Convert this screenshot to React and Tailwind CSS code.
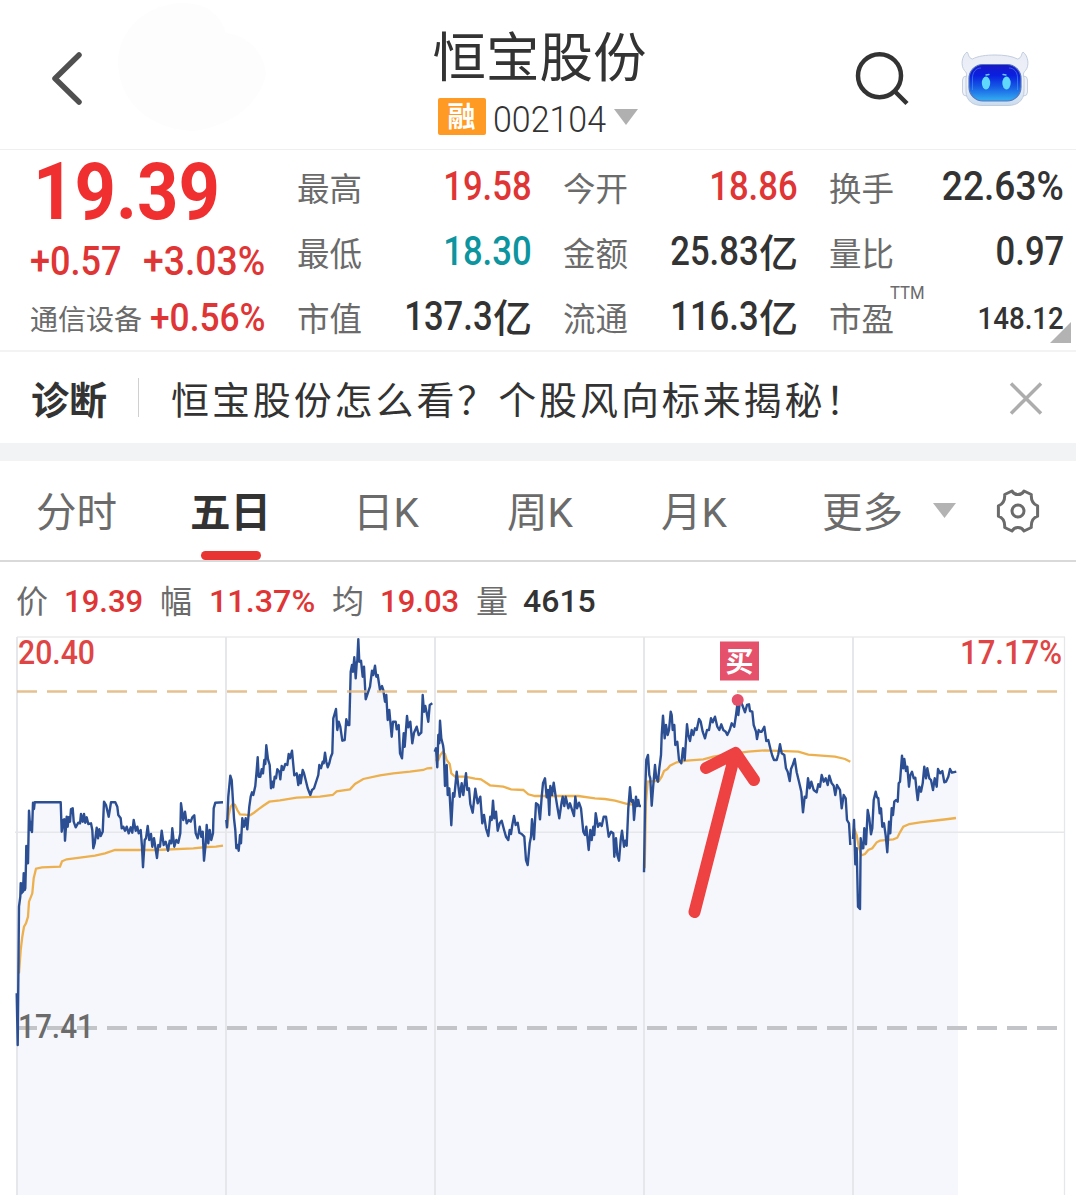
import React from 'react';

const COLORS = {
  price: '#2c4f94',
  average: '#edb04e',
  area: '#f5f7fc',
  grid: '#e6e7ea',
};

const QUOTES = [
  [
    { label: '最高', value: '19.58', tone: 'text-[#e03535]' },
    { label: '今开', value: '18.86', tone: 'text-[#e03535]' },
    { label: '换手', value: '22.63%', fit: 'scale-x-[.905] text-[41px]', tone: 'text-[#333]' },
  ],
  [
    { label: '最低', value: '18.30', tone: 'text-[#0c949f]' },
    { label: '金额', value: '25.83', unit: '亿', tone: 'text-[#333]' },
    { label: '量比', value: '0.97', tone: 'text-[#333]' },
  ],
  [
    { label: '市值', value: '137.3', unit: '亿', tone: 'text-[#333]' },
    { label: '流通', value: '116.3', unit: '亿', tone: 'text-[#333]' },
    { label: '市盈', value: '148.12', note: 'TTM', fit: 'scale-x-[.865] pt-[2px] text-[32px]', tone: 'text-[#333]' },
  ],
];

// Intraday samples, three units per pixel, relative to each day's origin
const DAYS = [
  {
    origin: [0, 630],
    price:
      '50,1090 53,1245 55,1060 57,830 61,800 62,760 65,790 67,760 69,785 71,730 74,780 76,775 78,700 79,648 84,700 87,542 91,600 92,575 96,606 99,518 102,537 104,517 182,517 185,605 190,570 193,568 195,632 200,560 203,590 206,562 210,575 213,537 218,535 221,575 227,592 235,578 240,580 243,552 248,575 252,552 256,578 260,562 265,582 273,580 277,600 280,655 284,640 290,593 294,625 298,598 302,618 308,605 312,515 318,525 326,560 333,517 346,517 352,530 355,555 362,565 365,595 370,590 375,602 380,590 386,610 392,592 397,608 401,570 407,602 412,590 416,610 422,600 426,650 429,712 434,630 438,625 443,588 448,630 453,612 457,650 462,625 466,650 471,684 475,645 480,650 485,602 491,645 497,635 504,662 509,632 514,640 517,595 523,650 529,630 535,638 541,610 543,520 550,570 555,545 560,580 566,570 572,575 577,562 583,556 587,610 593,625 599,590 604,620 608,605 612,692 617,640 620,585 625,640 629,600 634,630 639,610 641,535 646,518 669,517',
    average:
      '57,1030 62,960 67,920 72,890 78,880 84,860 87,815 97,790 101,745 108,716 126,712 180,710 186,694 200,688 240,683 285,677 315,670 345,660 470,660 580,655 620,651 648,650 669,647',
  },
  {
    origin: [220, 630],
    price:
      '19,570 21,592 25,500 31,437 35,450 38,500 42,565 46,600 49,655 53,645 56,662 60,615 63,640 67,565 72,590 77,565 82,598 88,530 92,500 96,487 100,495 106,468 110,420 113,382 116,440 121,440 125,418 129,430 133,390 136,402 139,346 144,388 149,405 153,475 157,455 160,472 164,440 168,445 172,418 178,425 181,448 185,408 190,420 196,402 202,405 206,372 210,385 216,362 219,395 223,436 230,430 235,465 239,435 242,460 248,420 252,430 257,450 263,475 271,495 276,480 282,475 290,450 295,435 298,405 303,415 308,395 311,400 315,368 319,395 323,412 328,400 332,382 337,370 340,265 343,255 348,237 352,300 356,275 361,290 367,332 374,330 379,268 384,285 388,285 392,125 396,105 399,125 403,82 407,145 410,100 412,92 415,28 418,95 423,92 428,140 432,110 437,208 443,190 450,170 456,122 460,135 465,107 469,140 473,135 480,180 486,168 490,180 495,215 499,195 503,270 508,240 515,320 519,275 527,275 530,298 536,285 540,370 546,385 551,310 554,350 561,258 565,292 571,275 577,340 582,308 590,290 596,315 604,308 608,195 612,245 616,228 620,248 625,275 629,225 637,220',
    average:
      '21,595 26,555 32,530 38,522 45,525 52,540 60,553 75,554 90,556 102,548 115,538 130,527 148,515 180,511 230,503 300,500 338,495 350,484 390,478 405,462 430,447 480,436 520,430 570,425 610,420 622,415 637,414',
  },
  {
    origin: [425, 680],
    price:
      '29,215 33,205 37,262 40,165 43,190 45,122 49,175 54,195 56,210 60,318 65,255 68,345 73,325 76,380 79,436 84,340 88,350 95,275 99,310 104,350 110,310 115,345 123,280 127,330 132,325 136,372 143,398 151,326 158,370 166,350 172,430 177,405 183,445 190,468 196,410 200,420 204,362 208,415 213,395 218,452 224,430 230,422 238,452 243,470 250,480 254,450 258,462 262,435 267,408 272,435 278,428 283,458 290,462 298,470 303,540 308,555 314,490 318,470 321,418 327,478 333,370 340,375 345,418 350,350 354,310 360,295 365,352 369,330 373,405 376,318 381,345 386,308 392,350 397,380 403,415 410,365 413,350 418,378 422,350 430,385 435,370 447,408 451,350 456,385 462,368 468,385 475,455 480,465 484,440 491,510 496,450 500,480 505,440 508,465 512,400 519,440 525,430 530,438 536,410 543,410 551,470 558,455 565,460 568,530 573,475 577,525 582,542 587,480 591,452 597,500 601,482 605,497 610,385 615,322 619,365 624,360 627,420 633,350 636,378 640,360 643,378 648,378',
    average:
      '31,240 40,240 46,225 53,216 60,222 65,240 74,252 79,280 90,290 120,290 150,296 168,298 195,316 235,320 258,328 295,330 310,343 330,348 460,348 510,355 540,357 570,362 608,372 645,375',
  },
  {
    origin: [635, 635],
    price:
      '27,712 31,460 34,375 39,360 43,420 46,430 50,512 55,450 60,390 64,430 69,440 73,400 78,360 80,300 84,242 89,310 93,270 98,300 102,285 107,230 110,240 113,285 118,270 121,330 127,320 132,375 139,385 144,340 149,375 156,268 160,300 165,318 170,285 175,300 180,280 185,285 192,252 197,260 203,290 210,310 216,285 222,285 228,250 233,262 240,245 247,275 253,285 259,268 265,285 272,290 277,300 284,285 290,265 298,275 303,240 307,210 310,240 315,195 322,210 330,232 336,210 342,208 345,228 352,230 356,270 363,290 366,312 371,285 376,290 380,290 388,275 394,318 400,315 407,345 412,362 417,375 425,375 430,358 435,328 440,355 448,360 453,400 458,410 464,438 468,402 473,390 479,372 485,412 492,440 499,470 504,532 509,485 514,488 519,430 524,460 529,440 536,465 545,472 550,448 555,455 560,420 566,440 572,430 578,450 583,422 590,445 596,452 601,480 606,450 615,465 620,520 626,480 632,490 636,555 642,565 646,630',
    average:
      '29,700 33,500 38,440 72,438 80,425 87,408 97,402 105,392 125,382 155,377 205,373 235,365 300,355 340,350 390,346 490,350 520,359 600,365 630,372 646,380',
  },
  {
    origin: [840, 635],
    price:
      '39,612 42,555 46,688 50,640 54,815 60,822 62,610 66,640 70,640 73,580 78,628 83,525 88,550 93,598 97,580 101,495 107,470 111,487 115,490 119,535 123,520 127,575 132,565 137,602 142,652 147,560 151,595 155,520 159,540 163,500 168,495 173,500 176,445 180,440 183,400 186,362 190,400 193,372 198,408 202,395 207,455 211,420 216,410 221,430 226,428 230,470 233,495 238,455 243,470 248,445 253,395 258,430 262,400 268,430 273,435 279,465 284,430 290,455 294,402 300,415 307,408 313,442 318,440 325,425 330,402 336,413 349,410',
    average:
      '42,580 50,600 56,635 64,661 75,657 85,645 97,640 110,622 120,617 160,613 172,608 180,592 190,575 208,567 240,562 300,555 325,552 348,549',
  },
];

const toPoints = (samples, [ox, oy]) =>
  samples
    .split(' ')
    .map((pair) => {
      const [x, y] = pair.split(',').map(Number);
      return `${(ox + x / 3).toFixed(1)},${(oy + y / 3).toFixed(1)}`;
    })
    .join(' ');

function RobotIcon() {
  return (
    <svg width="68" height="56" viewBox="961 51 68 56">
      <defs>
        <linearGradient id="shell" x1="0" y1="0" x2="0" y2="1">
          <stop offset="0" stopColor="#e9ecf5" />
          <stop offset="0.6" stopColor="#eff2f8" />
          <stop offset="1" stopColor="#c8dcee" />
        </linearGradient>
        <linearGradient id="visor" x1="0" y1="0" x2="0" y2="1">
          <stop offset="0" stopColor="#1a18c4" />
          <stop offset="0.3" stopColor="#0a1fe0" />
          <stop offset="0.6" stopColor="#1458e4" />
          <stop offset="1" stopColor="#35b0f2" />
        </linearGradient>
      </defs>
      <rect x="962.5" y="76" width="9" height="20" rx="4" fill="#eff2f8" stroke="#b9c5d8" strokeWidth="0.8" />
      <rect x="1018.5" y="76" width="9" height="20" rx="4" fill="#eff2f8" stroke="#b9c5d8" strokeWidth="0.8" />
      <path
        d="M967 52C961.500 56 960.500 66 964.500 70.500C967 73 967 75 966 78V91C966 101 973 105.500 982 105.500H1008C1017 105.500 1024 101 1024 91V78C1023 75 1023 73 1025.500 70.500C1029.500 66 1028.500 56 1023 52C1021 54 1022 58 1017.500 59C1012 56 1004 55 995 55C986 55 978 56 972.500 59C968 58 969 54 967 52Z"
        fill="url(#shell)"
        stroke="#bcc8da"
        strokeWidth="0.9"
      />
      <rect x="969" y="64.500" width="52" height="36.500" rx="14" fill="url(#visor)" stroke="#5676be" strokeWidth="1.200" />
      <path d="M972.500 90V78C972.500 72 976 68 981 68M1017.500 90V78C1017.500 72 1014 68 1009 68" fill="none" stroke="#5aa0f5" strokeOpacity="0.500" />
      <ellipse cx="986" cy="83" rx="4.200" ry="6.500" fill="#5fd8fb" />
      <ellipse cx="1006.500" cy="83" rx="4.200" ry="6.500" fill="#5fd8fb" />
      <path d="M986 75L989 74.500M1003 74.500L1006 75" stroke="#6ec8fb" strokeWidth="1.300" strokeLinecap="round" />
    </svg>
  );
}

function GearIcon() {
  return (
    <svg width="46" height="46" viewBox="-23 -23 46 46" fill="none" stroke="#6b6b6b" strokeWidth="3" strokeLinejoin="round">
      <path d="M-6-20C-3.500-15.200 3.500-15.200 6-20L13.300-16.500C13-11.500 14.500-7 19.600-5.200V5.200C14.500 7 13 11.500 13.300 16.500L6 20C3.500 15.200-3.500 15.200-6 20L-13.300 16.500C-13 11.500-14.500 7-19.600 5.200V-5.200C-14.500-7-13-11.500-13.300-16.500Z" />
      <circle r="6" />
    </svg>
  );
}

function Header() {
  return (
    <header className="flex h-[150px] items-start justify-between border-b border-[#efefef] pl-[50px] pr-[47px]">
      <div className="flex w-[383px]">
        <svg width="230" height="140" viewBox="50 0 230 140" fill="none">
          <path
            d="M182 3C210 3 222 18 226 33C250 36 264 54 266 74C260 106 226 128 192 131C150 128 120 104 118 64C118 28 146 5 182 3Z"
            fill="#fdfdfd"
          />
          <path d="M79 55L55 78.500L79 102" stroke="#505050" strokeWidth="5.500" strokeLinecap="round" strokeLinejoin="round" />
        </svg>
      </div>
      <div className="flex w-[214px] flex-col items-center">
        <h1 className="mt-[26px] whitespace-nowrap text-[53.500px] leading-[66px] text-[#333]">恒宝股份</h1>
        <div className="mt-[6px] flex h-[37px] w-[204px] items-center">
          <span className="flex h-[37px] w-[48px] shrink-0 items-center justify-center rounded-[2px] bg-[#ff9a24] pt-[3px] text-[28px] leading-none font-bold text-white">
            融
          </span>
          <span className="ml-[7px] w-[121px] shrink-0 origin-left scale-x-[.93] pt-[8px] text-[36.500px] leading-none font-light text-[#333]">002104</span>
          <svg className="shrink-0" width="24" height="16" viewBox="0 0 24 16">
            <path d="M0 0H24L12 16Z" fill="#b0b0b0" />
          </svg>
        </div>
      </div>
      <div className="flex w-[383px] justify-end gap-[51px] pt-[51px]">
        <svg width="56" height="56" viewBox="854 51 56 56" fill="none" stroke="#333" strokeWidth="4.500">
          <circle cx="879.500" cy="75.700" r="21.500" />
          <path d="M894.500 91L907 103.500" />
        </svg>
        <RobotIcon />
      </div>
    </header>
  );
}

function QuoteCell({ label, value, unit, note, fit = 'scale-x-[.845] text-[41px]', tone }) {
  return (
    <div className="flex w-[235px] items-center justify-between">
      <span className="relative pt-[7px] text-[32.500px] leading-none text-[#6b6b6b]">
        {label}
        {note && (
          <sup className="absolute top-[-14px] left-[61px] origin-left scale-x-[.88] text-[19px] leading-none font-normal">{note}</sup>
        )}
      </span>
      <span className={`flex items-center leading-none font-medium ${tone}`}>
        <span className={`origin-right ${fit}`}>{value}</span>
        {unit && <span className="pt-[5px] text-[39px]">{unit}</span>}
      </span>
    </div>
  );
}

function QuotePanel() {
  return (
    <section className="relative flex h-[202px] border-b-2 border-[#f3f3f3] pl-[30px]">
      <div className="w-[267px] text-[#e03535]">
        <div className="ml-[3px] w-[200px] origin-left scale-x-[.915] pt-[3px] text-[79px] leading-[78px] font-bold text-[#f03030]">19.39</div>
        <div className="flex h-[61px] items-center text-[41px] leading-none font-medium">
          <span className="w-[113px] origin-left scale-x-[.88]">+0.57</span>
          <span className="origin-left scale-x-[.91]">+3.03%</span>
        </div>
        <div className="flex h-[52px] items-center leading-none">
          <span className="w-[120px] shrink-0 pt-[5px] text-[28px] text-[#6b6b6b]">通信设备</span>
          <span className="origin-left scale-x-[.905] text-[39px] font-medium">+0.56%</span>
        </div>
      </div>
      <div className="flex flex-col pt-[4px]">
        {QUOTES.map((row, i) => (
          <div key={i} className="flex h-[65px] gap-[31px]">
            {row.map((cell) => (
              <QuoteCell key={cell.label} {...cell} />
            ))}
          </div>
        ))}
      </div>
      <svg className="absolute right-[5px] bottom-[7px]" width="21" height="21" viewBox="0 0 21 21">
        <path d="M21 0V21H0Z" fill="#b3b3b3" />
      </svg>
    </section>
  );
}

function DiagnoseBar() {
  return (
    <section className="flex h-[91px] items-center pr-[33px] pl-[31px] text-[#333]">
      <span className="w-[107px] pt-[7px] text-[38px] leading-none font-bold">诊断</span>
      <span className="h-[39px] w-px bg-[#d0d0d0]" />
      <span className="ml-[32px] flex-1 pt-[7px] text-[38px] leading-none tracking-[2.900px] whitespace-nowrap">
        恒宝股份怎么看？个股风向标来揭秘！
      </span>
      <svg width="34" height="34" viewBox="-17 -17 34 34" stroke="#adadad" strokeWidth="3.500">
        <path d="M-15-14.500L15 15.500M15-14.500L-15 15.500" />
      </svg>
    </section>
  );
}

function PeriodTabs() {
  return (
    <nav className="flex h-[101px] items-center border-b-2 border-[#d9d9d9] pl-[36px] text-[40.500px] leading-none text-[#6b6b6b]">
      <span className="w-[154px] pt-[6px]">分时</span>
      <span className="relative flex h-full w-[163px] items-center pt-[6px] font-bold text-[#333]">
        五日
        <i className="absolute bottom-0 left-[11px] h-[9px] w-[60px] rounded-full bg-[#e93434]" />
      </span>
      <span className="w-[154px] pt-[6px]">日K</span>
      <span className="w-[154px] pt-[6px]">周K</span>
      <span className="w-[161px] pt-[6px]">月K</span>
      <span className="w-[111px] pt-[6px]">更多</span>
      <svg width="23" height="15" viewBox="0 0 23 15">
        <path d="M0 0H23L11.500 15Z" fill="#b3b3b3" />
      </svg>
      <span className="ml-[39px]">
        <GearIcon />
      </span>
    </nav>
  );
}

function InfoRow() {
  return (
    <div className="flex h-[74px] items-center pt-[4px] pl-[16px] text-[32px] leading-none font-medium text-[#e03535]">
      <span className="w-[48px] pt-[2px] font-normal text-[#6b6b6b]">价</span>
      <span className="w-[96px]"><b className="inline-block origin-left scale-x-[.97] font-medium">19.39</b></span>
      <span className="w-[49px] pt-[2px] font-normal text-[#6b6b6b]">幅</span>
      <span className="w-[123px]"><b className="inline-block origin-left scale-x-[1.01] font-medium">11.37%</b></span>
      <span className="w-[48px] pt-[2px] font-normal text-[#6b6b6b]">均</span>
      <span className="w-[96px]"><b className="inline-block origin-left scale-x-[.97] font-medium">19.03</b></span>
      <span className="w-[47px] pt-[2px] font-normal text-[#6b6b6b]">量</span>
      <span className="text-[#333]">4615</span>
    </div>
  );
}

function FiveDayChart() {
  const prices = DAYS.map((d) => toPoints(d.price, d.origin));
  return (
    <svg className="block overflow-visible" width="1076" height="559" viewBox="0 636 1076 559" fill="none">
      <polygon points={`17,1195 ${prices.join(' ')} 958,771 958,1195`} fill={COLORS.area} />
      <g stroke={COLORS.grid} strokeWidth="2">
        <path d="M17 637H1065" stroke="#f0f0f0" />
        <path d="M17 637V1195M226 637V1195M435 637V1195M644 637V1195M853 637V1195" />
        <path d="M1064.500 637V1195" strokeWidth="1.300" />
        <path d="M15 832.300H1064" strokeWidth="1.500" />
      </g>
      <path d="M17 1028H1058" stroke="#c3c4c8" strokeWidth="4" strokeDasharray="20 10" />
      {DAYS.map((d, i) => (
        <polyline key={i} points={toPoints(d.average, d.origin)} stroke={COLORS.average} strokeWidth="2.300" />
      ))}
      {prices.map((points, i) => (
        <polyline key={i} points={points} stroke={COLORS.price} strokeWidth="2.400" strokeLinejoin="round" />
      ))}
      <path d="M17 691.500H1058" stroke="#dfb67c" strokeOpacity="0.850" strokeWidth="2.500" strokeDasharray="20 10" />
      <g fontSize="32.500" fontWeight="500">
        <text x="18" y="663.500" fill="#e04545" textLength="77" lengthAdjust="spacingAndGlyphs">20.40</text>
        <text x="1062" y="663.500" fill="#e04545" textAnchor="end" textLength="102" lengthAdjust="spacingAndGlyphs">17.17%</text>
        <text x="18" y="1037.500" fill="#6b6b6b" textLength="76" lengthAdjust="spacingAndGlyphs">17.41</text>
      </g>
      <rect x="720" y="641.500" width="39" height="39" fill="#e5506a" />
      <text x="739.500" y="672" fill="#fff" fontSize="28" fontWeight="700" textAnchor="middle">买</text>
      <circle cx="737.700" cy="700" r="6" fill="#e5506a" />
      <path
        d="M694.500 912L735 754M706 768L735.500 753L754 780"
        stroke="#ee4141"
        strokeWidth="12"
        strokeLinecap="round"
        strokeLinejoin="round"
      />
    </svg>
  );
}

export default function App() {
  return (
    <main className="h-[1195px] w-[1076px] overflow-hidden bg-white font-[Roboto,'Noto_Sans_CJK_SC',sans-serif]">
      <Header />
      <QuotePanel />
      <DiagnoseBar />
      <div className="h-[18px] bg-[#f2f3f5]" />
      <PeriodTabs />
      <InfoRow />
      <FiveDayChart />
    </main>
  );
}
